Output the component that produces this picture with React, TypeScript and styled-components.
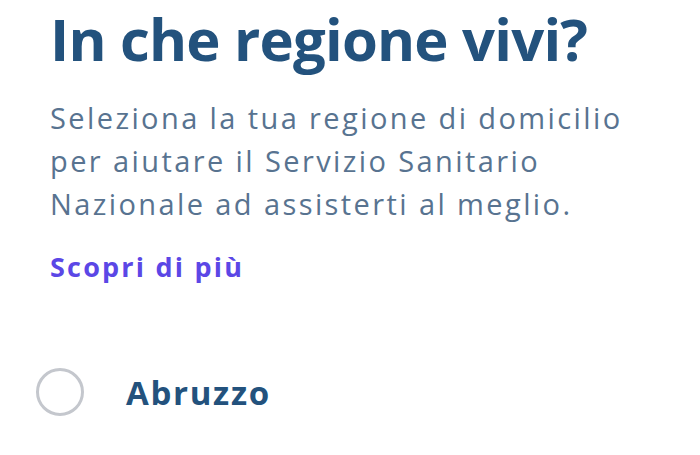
import React from 'react'
import styled, { createGlobalStyle } from 'styled-components'

const GlobalStyle = createGlobalStyle`
  html, body {
    margin: 0;
    padding: 0;
    background: #ffffff;
  }
  body {
    font-family: "Open Sans", "Noto Sans", sans-serif;
  }
`

const Page = styled.div`
  width: 700px;
  height: 455px;
  overflow: hidden;
  padding: 0 50px;
  box-sizing: border-box;
  display: flex;
  flex-direction: column;
`

const Title = styled.h1`
  margin: 0;
  font-size: 58px;
  line-height: 78px;
  font-weight: 700;
  color: #23527d;
  letter-spacing: -0.8px;
`

const Lead = styled.p`
  margin: 18px 0 0 0;
  font-size: 29px;
  line-height: 43px;
  font-weight: 500;
  color: #587390;
  letter-spacing: 2.4px;
`

const MoreLink = styled.a`
  margin-top: 24px;
  font-size: 27px;
  line-height: 36px;
  font-weight: 700;
  color: #5b47e6;
  text-decoration: none;
  letter-spacing: 2.2px;
`

const RegionList = styled.ul`
  list-style: none;
  margin: 82px 0 0 -14px;
  padding: 0;
`

const RegionRow = styled.li`
  display: flex;
  align-items: center;
  gap: 42px;
  height: 50px;
`

const Radio = styled.span<{ checked?: boolean }>`
  width: 42px;
  height: 42px;
  border-radius: 50%;
  border: 3px solid ${({ checked }) => (checked ? '#5b47e6' : '#c4c7cd')};
  box-sizing: content-box;
  flex-shrink: 0;
`

const RegionName = styled.span`
  font-size: 33px;
  font-weight: 700;
  color: #23527d;
  letter-spacing: 1.7px;
`

const regions = ['Abruzzo']

export default function App() {
  return (
    <>
      <GlobalStyle />
      <Page>
        <Title>In che regione vivi?</Title>
        <Lead>
          Seleziona la tua regione di domicilio
          <br />
          per aiutare il Servizio Sanitario
          <br />
          Nazionale ad assisterti al meglio.
        </Lead>
        <MoreLink href="#">Scopri di più</MoreLink>
        <RegionList>
          {regions.map((r) => (
            <RegionRow key={r}>
              <Radio />
              <RegionName>{r}</RegionName>
            </RegionRow>
          ))}
        </RegionList>
      </Page>
    </>
  )
}
